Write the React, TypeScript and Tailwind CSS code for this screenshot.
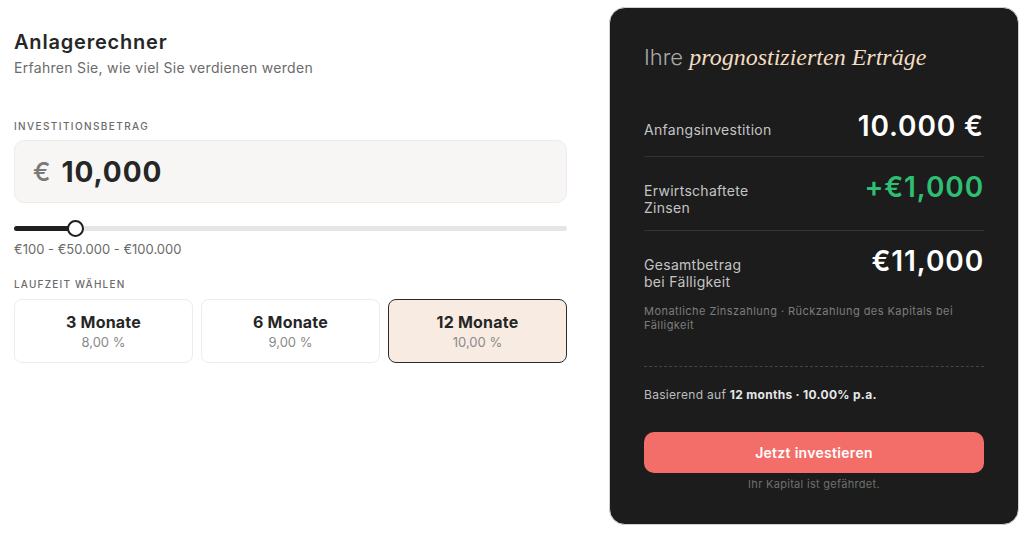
import React from "react";

const sans = "font-['Inter','Noto_Sans',sans-serif]";

function Card({ title, rate, active }: { title: string; rate: string; active?: boolean }) {
  return (
    <div
      className={
        "flex h-[64px] flex-1 flex-col items-center justify-center rounded-[8px] " +
        (active ? "border-[1.5px] border-[#2b2b2b] bg-[#f8ece2]" : "border border-[#ececec] bg-white")
      }
    >
      <div className="text-[16px] font-bold leading-[20px] tracking-[0.2px] text-[#262626]">{title}</div>
      <div className="mt-[1px] text-[13px] leading-[18px] text-[#8a8a8a]">{rate}</div>
    </div>
  );
}

export default function App() {
  return (
    <div className={`${sans} flex h-[533px] w-[1024px] gap-[42px] bg-white pl-[14px] pt-[7px]`}>
      {/* Left column */}
      <div className="flex w-[553px] flex-col pt-[23px]">
        <h1 className="text-[20px] font-semibold leading-[24px] tracking-[0.8px] text-[#262626]">Anlagerechner</h1>
        <p className="mt-[4px] text-[14px] leading-[20px] tracking-[0.3px] text-[#6b6b6b]">Erfahren Sie, wie viel Sie verdienen werden</p>

        <div className="mt-[41px] text-[10px] font-medium leading-[14px] tracking-[1.4px] text-[#6b6b6b]">INVESTITIONSBETRAG</div>
        <div className="mt-[7px] flex h-[63px] items-center gap-[11px] rounded-[10px] border border-[#eeecea] bg-[#f7f6f4] pl-[18px]">
          <span className="text-[26px] font-medium text-[#7a7a7a]">€</span>
          <span className="text-[28px] font-bold tracking-[0.9px] text-[#262626]">10,000</span>
        </div>

        <div className="relative mt-[17px] h-[16px]">
          <div className="absolute left-0 right-0 top-[6px] h-[5px] rounded-full bg-[#e6e6e6]" />
          <div className="absolute left-0 top-[6px] h-[5px] w-[62px] rounded-full bg-[#1f1f1f]" />
          <div className="absolute left-[53px] top-0 h-[17px] w-[17px] rounded-full border-2 border-[#1f1f1f] bg-white" />
        </div>
        <div className="mt-[4px] text-[13px] leading-[18px] text-[#6b6b6b]">€100 - €50.000 - €100.000</div>

        <div className="mt-[19px] text-[10px] font-medium leading-[14px] tracking-[1.2px] text-[#6b6b6b]">LAUFZEIT WÄHLEN</div>
        <div className="mt-[8px] flex gap-[8px]">
          <Card title="3 Monate" rate="8,00 %" />
          <Card title="6 Monate" rate="9,00 %" />
          <Card title="12 Monate" rate="10,00 %" active />
        </div>
      </div>

      {/* Right panel */}
      <div className="flex h-[518px] w-[410px] flex-col rounded-[16px] border border-[#d0d0d0] bg-[#1c1c1c] px-[34px] pt-[34px]">
        <h2 className="text-[22px] leading-[30px]">
          <span className="font-light text-[#a9a9a9]">Ihre </span>
          <span className="font-['Liberation_Serif','DejaVu_Serif',serif] text-[24px] italic text-[#f3dcc0]">prognostizierten Erträge</span>
        </h2>

        <div className="mt-[37px] flex items-center justify-between border-b border-[#343434] pb-[13px]">
          <span className="mt-[7px] text-[14px] tracking-[0.3px] text-[#c4c4c4]">Anfangsinvestition</span>
          <span className="text-[28px] font-semibold leading-[34px] tracking-[0.9px] text-white">10.000 €</span>
        </div>

        <div className="flex items-start justify-between border-b border-[#343434] pb-[14px] pt-[13px]">
          <span className="mt-[12px] text-[14px] leading-[17px] tracking-[0.3px] text-[#c4c4c4]">
            Erwirtschaftete
            <br />
            Zinsen
          </span>
          <span className="text-[28px] font-semibold leading-[34px] tracking-[0.9px] text-[#2fbf73]">+€1,000</span>
        </div>

        <div className="flex items-start justify-between pt-[13px]">
          <span className="mt-[12px] text-[14px] leading-[17px] tracking-[0.3px] text-[#c4c4c4]">
            Gesamtbetrag
            <br />
            bei Fälligkeit
          </span>
          <span className="text-[28px] font-semibold leading-[34px] tracking-[0.9px] text-white">€11,000</span>
        </div>

        <p className="mt-[14px] text-[11px] leading-[14px] tracking-[0.45px] text-[#7d7d7d]">
          Monatliche Zinszahlung · Rückzahlung des Kapitals bei Fälligkeit
        </p>

        <div className="mt-[34px] border-t border-dashed border-[#444]" />

        <p className="mt-[19px] text-[12px] leading-[18px] tracking-[0.3px] text-[#bdbdbd]">
          Basierend auf <span className="font-bold text-[#e6e6e6]">12 months · 10.00% p.a.</span>
        </p>

        <button className="mt-[28px] h-[41px] w-full rounded-[10px] bg-[#f46e69] text-[14px] font-semibold tracking-[0.3px] text-white">
          Jetzt investieren
        </button>
        <p className="mt-[4px] text-center text-[11px] leading-[14px] tracking-[0.3px] text-[#6f6f6f]">Ihr Kapital ist gefährdet.</p>
      </div>
    </div>
  );
}
